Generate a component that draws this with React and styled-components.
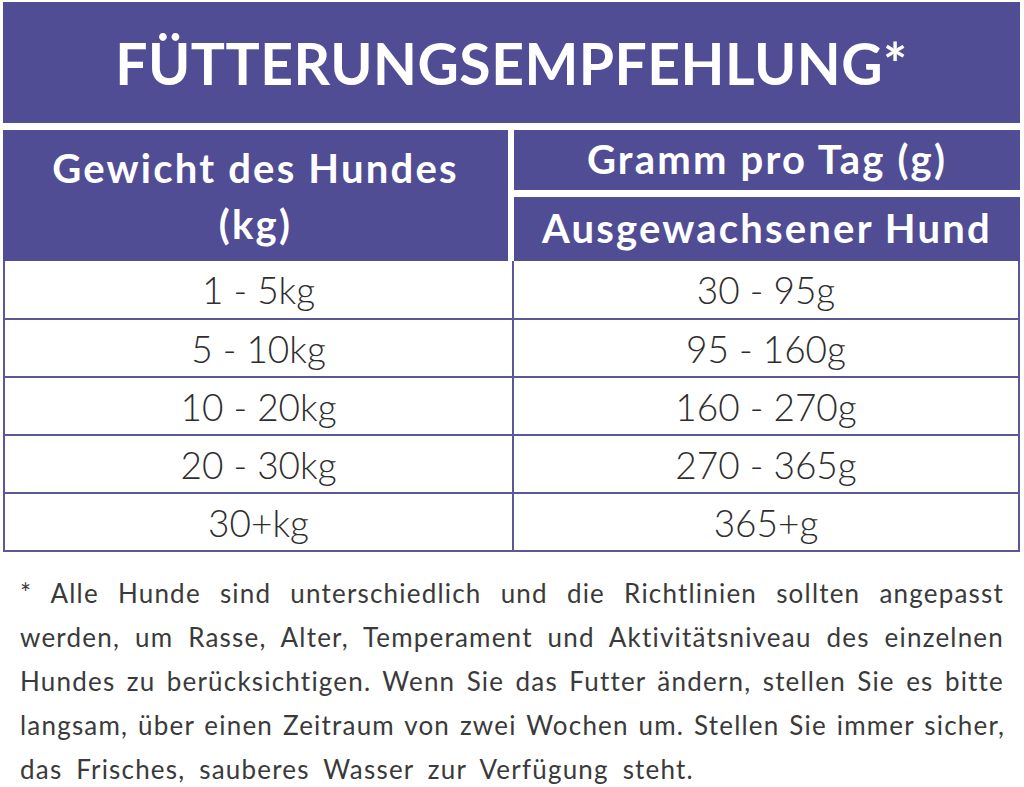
import React from "react";
import styled, { createGlobalStyle } from "styled-components";

const PURPLE = "#514d95";
const LINE = "#5b5799";

const GlobalStyle = createGlobalStyle`
  html, body {
    margin: 0;
    padding: 0;
    background: #ffffff;
  }
  body {
    font-family: Lato, "Open Sans", "Liberation Sans", sans-serif;
  }
`;

const Page = styled.div`
  width: 1024px;
  height: 787px;
  box-sizing: border-box;
  padding: 2px 4px 0 3px;
  background: #fff;
  overflow: hidden;
`;

const TitleBar = styled.div`
  height: 121px;
  background: ${PURPLE};
  color: #fff;
  display: flex;
  align-items: center;
  justify-content: center;
  font-size: 57px;
  font-weight: 700;
  letter-spacing: 0.5px;
  padding-top: 1px;
  box-sizing: border-box;
`;

const HeadGrid = styled.div`
  margin-top: 7px;
  display: grid;
  grid-template-columns: 505px 1fr;
  grid-template-rows: 60px 64px;
  column-gap: 6px;
  row-gap: 7px;
`;

const HeadCell = styled.div`
  background: ${PURPLE};
  color: #fff;
  font-weight: 700;
  font-size: 40px;
  letter-spacing: 2.2px;
  line-height: 56px;
  display: flex;
  flex-direction: column;
  align-items: center;
  justify-content: center;
  text-align: center;
  padding-bottom: ${(p) => (p.$tall ? 0 : 3)}px;
  box-sizing: border-box;
  grid-row: ${(p) => (p.$tall ? "1 / span 2" : "auto")};
`;

const Body = styled.div`
  border: 2px solid ${LINE};
  border-top: none;
`;

const Row = styled.div`
  display: grid;
  grid-template-columns: 507px 1fr;
  height: ${(p) => (p.$first ? 57 : 56)}px;
  border-top: ${(p) => (p.$first ? "none" : `2px solid ${LINE}`)};
`;

const Cell = styled.div`
  display: flex;
  align-items: center;
  justify-content: center;
  font-size: 37px;
  font-weight: 300;
  color: #2e2e2e;
  border-left: ${(p) => (p.$divider ? `2px solid ${LINE}` : "none")};
`;

const Note = styled.div`
  margin-top: 19px;
  padding: 0 16px 0 17px;
  font-size: 26px;
  letter-spacing: 1.2px;
  line-height: 44px;
  font-weight: 400;
  color: #3a3a3a;
`;

const NoteLine = styled.span`
  display: block;
  white-space: nowrap;
  word-spacing: ${(p) => (p.$last ? 6 : 2)}px;
  text-align: justify;
  text-align-last: ${(p) => (p.$last ? "left" : "justify")};
`;

const rows = [
  ["1 - 5kg", "30 - 95g"],
  ["5 - 10kg", "95 - 160g"],
  ["10 - 20kg", "160 - 270g"],
  ["20 - 30kg", "270 - 365g"],
  ["30+kg", "365+g"],
];

const noteLines = [
  "* Alle Hunde sind unterschiedlich und die Richtlinien sollten angepasst",
  "werden, um Rasse, Alter, Temperament und Aktivitätsniveau des einzelnen",
  "Hundes zu berücksichtigen. Wenn Sie das Futter ändern, stellen Sie es bitte",
  "langsam, über einen Zeitraum von zwei Wochen um. Stellen Sie immer sicher,",
  "das Frisches, sauberes Wasser zur Verfügung steht.",
];

function App() {
  return (
    <Page>
      <GlobalStyle />
      <TitleBar>FÜTTERUNGSEMPFEHLUNG*</TitleBar>
      <HeadGrid>
        <HeadCell $tall>
          <span>Gewicht des Hundes</span>
          <span>(kg)</span>
        </HeadCell>
        <HeadCell>Gramm pro Tag (g)</HeadCell>
        <HeadCell>Ausgewachsener Hund</HeadCell>
      </HeadGrid>
      <Body>
        {rows.map((r, i) => (
          <Row key={r[0]} $first={i === 0}>
            <Cell>{r[0]}</Cell>
            <Cell $divider>{r[1]}</Cell>
          </Row>
        ))}
      </Body>
      <Note>
        {noteLines.map((l, i) => (
          <NoteLine key={i} $last={i === noteLines.length - 1}>
            {l}
          </NoteLine>
        ))}
      </Note>
    </Page>
  );
}

export default App;
